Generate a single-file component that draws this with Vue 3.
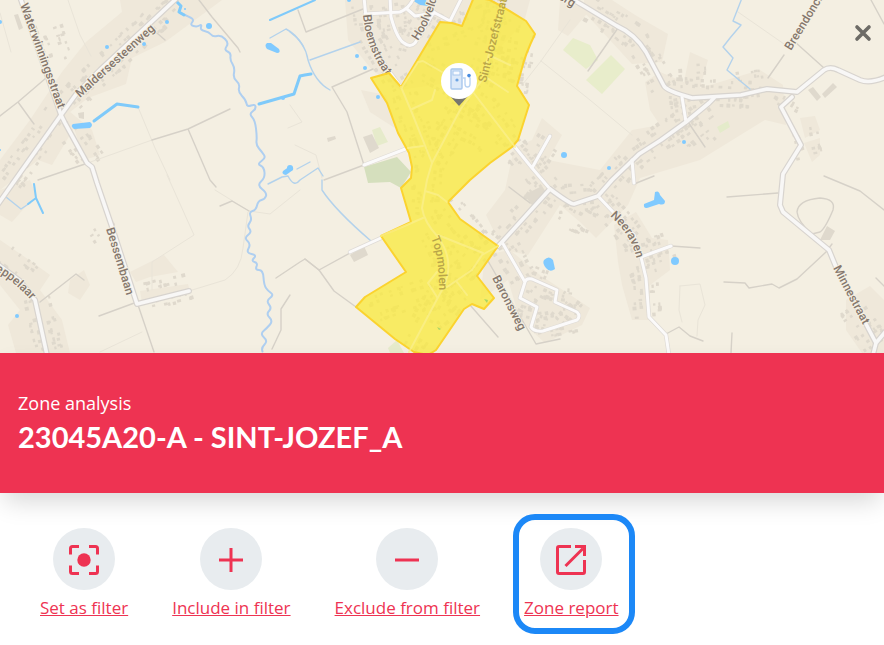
<script setup>
const zone =
  'M474 -3 L490 0 L503 7 L526 21 L535 34 Q525 55 522 68 L517 86 L529 105 L518 140 L512 147 L490 163 L470 180 L448 202 L460 219 L498 246 L477 276 L494 298 L484 309 L472 304 L464 309 L436 350 L428 355 L414 352 L395 339 L356 307 L365 297 L406 272 L381 236 L411 222 L401 188 L411 178 L412 167 L409 153 L398 133 L387 103 L371 78 L389 73 L401 87 L440 22 L452 23 L462 26 Z'

const builtUp = [
  '120,0 222,0 165,42 132,58 126,84 88,98 70,112 92,130 100,155 84,160 74,128 52,165 38,160 0,190 0,160 30,120 62,72 86,42 122,12',
  '0,190 30,180 36,195 12,222 0,215', '0,240 32,262 50,275 40,290 62,320 70,353 16,353 8,325 20,310 0,285',
  '70,280 84,270 90,285 80,300 68,293', '130,272 164,255 178,272 150,277 136,282', '140,291 188,284 190,292 142,302',
  '345,0 530,0 524,22 470,80 400,90 372,70 348,40', '361,90 386,95 398,130 370,112',
  '514,148 532,140 542,118 562,135 548,160 600,170 632,130 660,125 650,110 645,82 660,72 684,82 690,52 708,60 700,88 760,70 783,85 786,125 765,120 700,160 640,178 628,205 596,238 580,222 560,205 528,255 503,250 486,215 505,190',
  '584,0 612,0 635,15 668,34 662,62 632,64 610,40 584,12', '560,0 590,10 568,36 558,30',
  '485,255 510,250 540,275 590,308 582,325 545,343 520,320 508,280 480,300', '614,225 636,212 652,238 668,240 670,270 650,285 650,320 632,320 622,285 618,262',
  '800,118 815,116 820,130 805,138', '804,143 820,138 820,155 812,162', '846,300 870,286 884,300 884,353 862,353 846,330',
]

const greens = [
  ['364,167 397,157 411,172 401,188 390,182 368,183', '#d5dfbd'],
  ['372,130 380,127 388,142 377,146', '#e6ebcb'],
  ['573,38 590,45 598,60 586,69 563,50', '#e8edcb'],
  ['611,55 625,69 602,94 586,80', '#e8edcb'],
  ['717,127 728,121 730,127 720,133', '#e4ebca'],
  ['388,348 397,340 404,353 390,353', '#e6ebcb'],
]

const paths = [
  'M0 116 L18 102 L46 78 M18 102 L31 120 L34 124', 'M38 180 L85 164', 'M152 140 L188 129 L230 109 M188 129 L210 180 L216 187', 'M199 0 L212 17 L238 48 L240 52 M150 27 L165 40',
  'M220 206 L232 201 L249 211 M99 316 L137 302 L154 352', 'M40 302 L76 274 L84 280', 'M276 278 L300 262 L305 259 L319 270 M290 295 L281 309 L281 330 L272 349',
  'M298 10 L306 32 L363 9 M332 87 L373 69 M332 87 L347 112 L364 165 M324 180 L364 165', 'M319 270 L305 259 M319 270 L334 291 L356 307 M319 270 L350 253', 'M470 305 L498 337 M488 261 L536 344 L560 339',
  'M618 28 L588 71 M688 122 L705 147', 'M795 42 L824 68 M871 0 L884 24 M768 78 L784 55', 'M727 197 L778 193 M824 176 L860 191 L884 210', 'M724 282 L745 283 L749 288 L772 284 L779 288 L797 279 L826 252 L832 244',
  'M671 246 L700 248 M666 334 L679 327 L690 336 L703 341 M732 333 L731 353', 'M797 212 Q798 200 820 198 Q836 199 833 210 Q825 229 820 232 L812 234 Q798 222 797 212', 'M876 278 L884 286', 'M634 184 L654 176 M509 187 L530 203',
]
const faint = [
  'M68 0 L80 35 L91 56', 'M85 164 L152 140', 'M138 107 L155 148 L170 180 M167 175 L194 235 L152 262 L152 290', 'M189 291 L225 280 Q241 270 243 248 L248 212', 'M215 190 L249 211 L270 214 L300 190',
  'M100 352 L142 332', 'M0 13 L11 52', 'M541 61 L570 20 M541 61 L523 84 M541 61 L590 100 L632 135', 'M738 12 L784 44', 'M680 286 L700 284 L705 305 L698 320 L697 336 M680 286 L679 310 L682 322', 'M288 128 L302 122 L290 105 M295 145 L316 155 L322 178',
]

const roads = [
  'M-4 207 L20 173 L61 115 L77 93 L100 70 L178 -3', 'M20 -3 L61 115 L65 123 L87 163 L92 167 L97 183 L112 227 L137 304 L189 291', 'M-4 263 L20 281 L35 300 L47 355',
  'M565 -5 L584 6 L617 26 Q635 34 646 52 L664 86 Q667 91 692 98 L741 95 L767 89 L797 92 L824 70 Q830 66 838 70 L860 80 Q870 84 886 77',
  'M714 98 L709 103 L686 122 L661 140 L639 154 L612 180 L598 196 L574 204 Q570 204 550 189 L502 242 L498 246',
  'M792 97 L781 107 L801 145 L783 174 L780 205 L783 212 L829 250 L836 267 L876 343 L886 331 M876 343 L873 355',
]
const lanes = [
  'M682 97 L686 122', 'M632 160 L634 183', 'M515 147 L532 168 L550 189 M532 168 L550 136', 'M598 196 L614 213 L634 235 L641 257 L646 278 L649 317 L666 335 L669 355 M641 257 L671 246',
  'M502 242 L525 282 L520 298 L537 307 L531 327 Q534 332 543 331 L577 320 Q581 316 577 312 L555 302 L557 290 L532 279 Q526 278 525 282',
  'M364 -3 L367 28 Q372 50 401 87', 'M390 -3 L391 17 Q397 39 404 43 Q410 48 415 43 L434 12', 'M365 14 L400 12 Q410 8 414 -3 M407 9 L415 16 L435 13 L450 21 L462 -3', 'M364 165 L408 148 M350 252 L381 238',
]
const zoneLanes = [
  'M505 -3 L490 50 L482 80 L473 92 L460 110 L432 163 L427 180 L422 208 Q424 222 438 237 Q456 262 443 288 L409 352',
  'M473 92 L515 147', 'M401 87 L412 113 L432 163', 'M402 87 L418 62 L423 61 L442 72', 'M412 109 L432 100 L435 90', 'M438 235 L483 253', 'M498 246 L482 255 L472 270 L447 287', 'M381 236 L423 218',
  'M425 191 L438 195 L447 202', 'M408 148 L423 146', 'M493 57 L510 65', 'M487 78 L508 92', 'M437 272 L428 283 L437 297', 'M457 282 L467 295',
]

const river = [
  [180,13],[190,17],[194,20],[190,25],[197,27],[202,24],[200,30],[209,32],[213,37],[221,35],[229,43],[224,50],[231,53],[230,60],[235,68],[233,78],[240,84],[238,92],[246,100],[247,107],[255,104],[256,109],[249,114],[255,120],[257,137],[256,145],[262,152],[266,158],[257,164],[264,167],[265,178],
  [257,185],[267,193],[265,199],[258,201],[256,210],[249,212],[252,220],[247,226],[252,232],[244,238],[251,244],[246,253],[257,255],[251,261],[258,263],[255,270],[263,270],[264,285],[268,291],[274,295],[266,301],[272,308],[266,314],[273,321],[267,328],[260,334],[268,341],[261,348],[264,355],
]
const smooth = (pts) =>
  pts.slice(1, -1).reduce((d, [x, y], i) => {
    const [nx, ny] = pts[i + 2]
    return `${d} Q${x} ${y} ${(x + nx) / 2} ${(y + ny) / 2}`
  }, `M${pts[0].join(' ')}`)
const riverPath = smooth(river)

const brooks = [
  'M742 -2 L733 21 L741 25 L730 38 L723 47 L733 58 L727 70 L750 89', 'M290 32 Q305 42 308 60 Q315 82 330 90', 'M310 60 L360 42', 'M322 180 L322 190 Q335 210 371 241', 'M6 197 L21 209 L30 203',
  'M270 38 L286 29 Q296 34 303 46', 'M268 184 L282 177 L288 176 Q294 188 300 180 L318 168 L323 176', 'M297 169 L310 162',
]
const canals = [
  ['M94 121 L117 104 L138 107', 3], ['M259 104 L294 94 L300 76 Q304 75 311 74', 3], ['M270 20 L315 0', 2], ['M34 184 L36 198 L43 213 M36 198 L28 204', 2], ['M177 2 L181 6 L179 12 L184 15', 3],
]
const ponds = [
  'M73 124 L90 122 Q94 125 90 128 L74 129 Q70 126 73 124', 'M267 43 L271 43 L279 49 Q281 53 277 53 L267 49 Q264 45 267 43', 'M283 171 L290 166 Q294 166 293 170 L286 175 Q281 174 283 171',
  'M412 0 L426 0 L428 6 L420 5 Z', 'M544 260 Q549 255 553 260 L555 269 Q550 273 546 268 Q542 263 544 260', 'M655 192 Q659 190 660 195 L665 201 Q665 206 659 204 L650 207 Q643 210 644 204 L654 200 Z',
]
const pools = [[209,26,3],[107,47,2],[144,44,2],[167,22,2],[185,9,1],[0,22,2],[283,98,2],[564,155,3],[684,142,2],[609,168,2],[675,261,4],[17,316,2],[357,56,2],[365,68,2],[378,97,2],[0,150,1],[290,168,3],[349,0,2]]
const bigBuildings = ['363,137 372,134 379,148 370,153', '350,255 364,246 368,255 354,262', '808,90 813,87 821,97 817,101', '822,94 833,83 837,87 825,98', '820,240 827,226 835,231 830,240', '524,195 542,186 547,194 532,205', '14,15 18,14 23,28 19,30', '327,138 335,136 336,139 328,142', '78,113 84,112 84,119 79,118']

const housing = [
  [[8,183],[55,117]], [[64,105],[170,5]], [[47,20],[60,60]], [[70,130],[94,162]], [[0,254],[30,276]], [[36,295],[50,350]], [[365,0],[368,30],[401,87]], [[390,0],[396,35],[412,40],[430,10]], [[420,40],[505,10]],
  [[500,5],[480,85],[432,163]], [[525,25],[515,90]], [[403,90],[430,160]], [[420,65],[480,100],[515,145]], [[430,165],[424,215],[448,260],[442,290],[410,348]], [[490,60],[520,70]], [[440,110],[490,140]], [[370,310],[430,290]], [[430,320],[465,290]], [[445,200],[485,250],[450,285]],
  [[515,147],[550,189],[502,242]], [[550,140],[532,165]], [[584,5],[634,35],[664,86]], [[666,90],[750,94]], [[766,82],[740,86]], [[710,104],[639,154],[598,196],[560,200]], [[682,97],[686,122],[704,145]], [[692,62],[694,86]],
  [[505,244],[525,280]], [[522,298],[537,307],[532,327],[577,318],[556,302],[557,290],[532,280]], [[600,198],[636,240],[646,278],[649,316]], [[645,253],[670,245]], [[790,98],[784,110]], [[804,128],[810,156]], [[850,304],[876,343]], [[142,297],[188,286]], [[100,225],[106,235]], [[560,210],[590,225]],
]
let seed = 17
const random = () => (seed = (seed * 16807) % 2147483647) / 2147483647
const houses = housing.flatMap((line) =>
  line.slice(1).flatMap(([x2, y2], i) => {
    const [x1, y1] = line[i]
    const length = Math.hypot(x2 - x1, y2 - y1)
    const angle = (Math.atan2(y2 - y1, x2 - x1) * 180) / Math.PI
    return Array.from({ length: Math.round(length / 7) * 4 }, (_, k) => {
      const side = k % 2 ? 1 : -1
      return {
        along: random() * length,
        across: side * (k % 4 < 2 ? 6 : 12) + random() * 2 - 2,
        w: 2 + random() * 2,
        h: 2 + random() * 2,
        place: `translate(${x1} ${y1}) rotate(${angle})`,
      }
    })
  }),
)

const outerLabels = [
  { id: 'waterwinning', d: 'M20 5 L65 128', text: 'Waterwinningsstraat' },
  { id: 'malder', d: 'M80 98 L180 7', text: 'Maldersesteenweg' },
  { id: 'bessem', d: 'M106 229 L140 339', text: 'Bessembaan' },
  { id: 'eppelaar', d: 'M-5 271 Q10 278 31 300 L45 315', text: 'eppelaar' },
  { id: 'bloem', d: 'M363 15 Q366 50 388 78 L398 92', text: 'Bloemstraat' },
  { id: 'hoolveld', d: 'M418 41 Q432 20 439 -10 L444 -40', text: 'Hoolveld' },
  { id: 'baron', d: 'M492 278 L530 352', text: 'Baronsweg' },
  { id: 'breendonck', d: 'M791 51 L833 -18', text: 'Breendonck' },
  { id: 'neeraven', d: 'M610 216 Q631 234 637 260 L640 275', text: 'Neeraven' },
  { id: 'minne', d: 'M833 268 L874 346', text: 'Minnestraat' },
  { id: 'berg', d: 'M552 -5 L590 18', text: 'berg' },
]
const zoneLabels = [
  { id: 'jozef', d: 'M486 83 L512 -20', text: 'Sint-Jozefstraat' },
  { id: 'topmolen', d: 'M431 238 Q440 258 439 300', text: 'Topmolen' },
]
const labels = [...outerLabels, ...zoneLabels]

const actions = [
  { label: 'Set as filter', icon: 'focus' },
  { label: 'Include in filter', icon: 'plus' },
  { label: 'Exclude from filter', icon: 'minus' },
  { label: 'Zone report', icon: 'open', highlighted: true },
]
</script>

<template>
  <main class="panel">
    <section class="map-area" aria-label="Map">
      <svg class="map" viewBox="0 0 884 353" aria-hidden="true">
        <rect width="884" height="353" fill="#f4efe2" />
        <polygon v-for="p in builtUp" :key="p" :points="p" fill="#efe8da" />
        <polygon v-for="[p, color] in greens" :key="p" :points="p" :fill="color" />
        <g fill="#dfd9cd">
          <rect v-for="(h, i) in houses" :key="i" :x="h.along" :y="h.across" :width="h.w" :height="h.h" :transform="h.place" />
          <polygon v-for="p in bigBuildings" :key="p" :points="p" />
        </g>
        <g class="line">
          <path v-for="d in faint" :key="d" :d="d" stroke="#e9e4d8" />
          <path v-for="d in paths" :key="d" :d="d" stroke="#d6d1c8" stroke-width="1.4" />
          <path v-for="d in brooks" :key="d" :d="d" stroke="#b3d2ec" stroke-width="1.4" />
          <path :d="riverPath" stroke="#afcff0" stroke-width="2" />
          <path v-for="[d, w] in canals" :key="d" :d="d" stroke="#7fcafa" :stroke-width="w" />
        </g>
        <g fill="#80caff">
          <path v-for="d in ponds" :key="d" :d="d" />
          <circle v-for="([x, y, r], i) in pools" :key="i" :cx="x" :cy="y" :r="r" />
        </g>
        <g class="line">
          <path v-for="d in lanes" :key="d" :d="d" stroke="#dfdbd6" stroke-width="4.4" />
          <path v-for="d in roads" :key="d" :d="d" stroke="#d8d4cf" stroke-width="6" />
          <path v-for="d in lanes" :key="d" :d="d" stroke="#fbfafa" stroke-width="3" />
          <path v-for="d in roads" :key="d" :d="d" stroke="#f8f7f6" stroke-width="3.6" />
        </g>
        <defs>
          <path v-for="l in labels" :id="l.id" :key="l.id" :d="l.d" />
        </defs>
        <text v-for="l in outerLabels" :key="l.id" class="street">
          <textPath :href="'#' + l.id">{{ l.text }}</textPath>
        </text>
        <path :d="zone" fill="#faea3a" fill-opacity="0.75" stroke="#fbd32f" stroke-width="2" stroke-linejoin="round" />
        <g class="line" opacity="0.75">
          <path v-for="d in zoneLanes" :key="d" :d="d" stroke="#fbf08c" stroke-width="2" />
        </g>
        <text v-for="l in zoneLabels" :key="l.id" class="street in-zone">
          <textPath :href="'#' + l.id">{{ l.text }}</textPath>
        </text>
        <path d="M484 299 l4 1 l-1 3 Z M437 327 l4 2 l-2 1 Z" fill="#a9d565" />
        <g>
          <path d="M450 96 H468 L459 106 Z" fill="#77766f" />
          <circle cx="459" cy="81" r="18" fill="#fff" />
          <rect x="451" y="69" width="11" height="20" rx="1" fill="#dce9f9" stroke="#a8c7ed" stroke-width="1.4" />
          <rect x="453" y="71" width="7" height="4" fill="#f7faff" stroke="#a8c7ed" />
          <circle cx="457" cy="80" r="1.6" fill="#6ea4e3" />
          <path d="M463 78 h2 v6 q0 3 2.500 3 q2.500 0 2.500 -3 v-6 l-2 -2" fill="none" stroke="#b9d3f2" stroke-width="1.4" />
          <circle cx="469" cy="75.500" r="1.800" fill="#4a8de0" />
        </g>
      </svg>
      <button class="close" type="button" aria-label="Close">
        <svg viewBox="0 0 18 18" aria-hidden="true"><path d="M3 3 L15 15 M15 3 L3 15" /></svg>
      </button>
    </section>

    <header class="banner">
      <p class="kicker">Zone analysis</p>
      <h1 class="title">23045A20-A - SINT-JOZEF_A</h1>
    </header>

    <nav class="actions" aria-label="Zone actions">
      <a v-for="a in actions" :key="a.label" href="#" class="action" :class="{ highlighted: a.highlighted }">
        <span class="disc">
          <svg viewBox="0 0 40 40" aria-hidden="true">
            <template v-if="a.icon === 'focus'">
              <path d="M6.500 15.500 V9.500 Q6.500 7.500 8.500 7.500 H15 M25 7.500 H31.500 Q33.500 7.500 33.500 9.500 V15.500 M33.500 26.500 V32.500 Q33.500 34.500 31.500 34.500 H25 M15 34.500 H8.500 Q6.500 34.500 6.500 32.500 V26.500" />
              <circle cx="20" cy="21" r="6.700" />
            </template>
            <path v-else-if="a.icon === 'plus'" d="M8 21 H32 M20 9 V33" />
            <path v-else-if="a.icon === 'minus'" d="M8 21 H32" />
            <g v-else>
              <path d="M20 7.500 H8 Q6.500 7.500 6.500 9 V33 Q6.500 34.500 8 34.500 H32 Q33.500 34.500 33.500 33 V21 M14.500 27 L32 9.500" />
              <path d="M24 7.500 H33.500 V17" />
            </g>
          </svg>
        </span>
        <span class="caption">{{ a.label }}</span>
      </a>
    </nav>
  </main>
</template>

<style>
body {
  background: #fff;
}
</style>

<style scoped>
.panel {
  font-family: "Open Sans", "Noto Sans", sans-serif;
  overflow: hidden;
}
.map-area {
  position: relative;
}
.map {
  display: block;
  width: 100%;
  height: auto;
}
.line {
  fill: none;
  stroke-linejoin: round;
  stroke-linecap: round;
}
.street {
  font-family: Roboto, sans-serif;
  font-size: 12px;
  font-weight: 500;
  fill: #85776d;
  stroke: #f4efe2;
  stroke-width: 2px;
  stroke-linejoin: round;
  paint-order: stroke;
}
.in-zone {
  fill: #b9a548;
  stroke: none;
}
.close {
  position: absolute;
  top: 24px;
  right: 12px;
  width: 18px;
  height: 18px;
  padding: 0;
  border: 0;
  background: none;
  cursor: pointer;
}
.close svg {
  display: block;
  fill: none;
  stroke: #6d6b66;
  stroke-width: 3.6;
  stroke-linecap: round;
}
.banner {
  position: relative;
  padding: 38px 18px;
  background: #ee3352;
  color: #fff;
  box-shadow: 0 12px 24px -4px rgba(0, 0, 0, 0.16);
}
.kicker {
  margin: 0;
  font-size: 18px;
  line-height: 24px;
}
.title {
  margin: 4px 0 0;
  font-family: Lato, sans-serif;
  font-size: 29px;
  line-height: 36px;
  font-weight: 700;
}
.actions {
  display: flex;
  flex-wrap: wrap;
  gap: 44px;
  padding: 35px 40px;
}
.action {
  position: relative;
  display: flex;
  flex-direction: column;
  align-items: center;
  gap: 6px;
  color: #ee3352;
}
.disc {
  display: grid;
  place-items: center;
  width: 62px;
  height: 62px;
  border-radius: 50%;
  background: #e8ecef;
}
.disc svg {
  width: 40px;
  height: 40px;
  fill: none;
  stroke: #ee3352;
  stroke-width: 3;
}
.disc circle {
  fill: #ee3352;
  stroke: none;
}
.caption {
  font-size: 17px;
  line-height: 24px;
}
.highlighted::after {
  content: "";
  position: absolute;
  inset: -14px -16px -14px -11px;
  border: 6px solid #1c88f7;
  border-radius: 22px;
}
</style>
